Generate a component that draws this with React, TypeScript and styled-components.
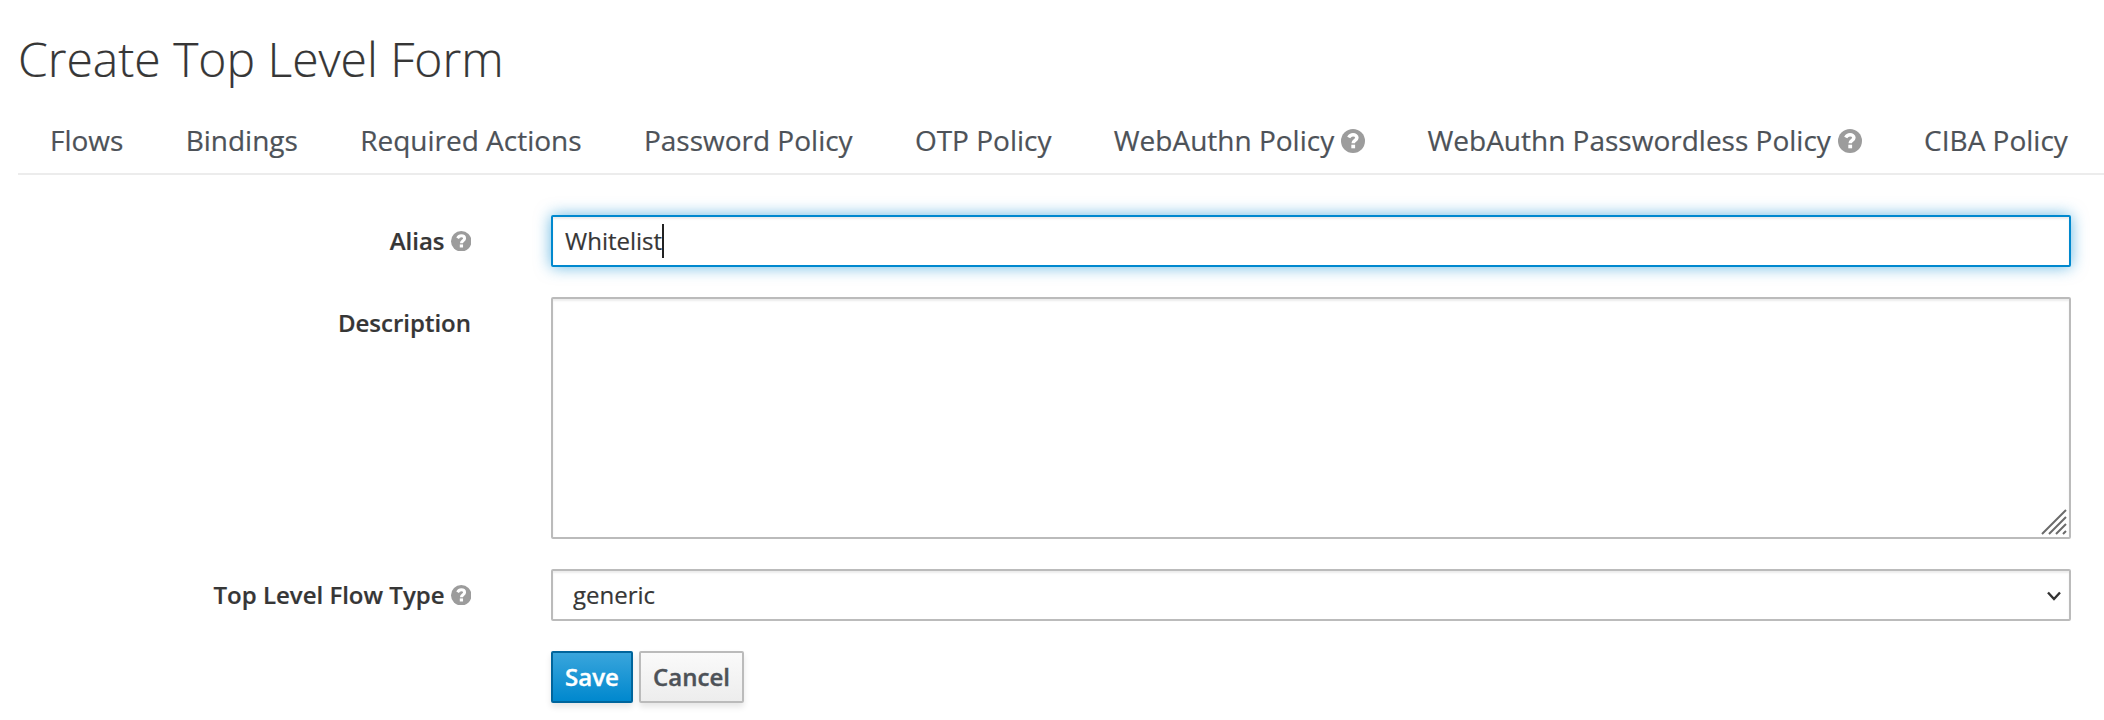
import React from "react";
import styled, { createGlobalStyle, css } from "styled-components";

const Global = createGlobalStyle`
  * { box-sizing: border-box; }
  html, body { margin: 0; background: #fff; overflow: hidden; }
  body, textarea, select, button { font-family: "Open Sans", "Noto Sans", sans-serif; }
`;

const Page = styled.main`
  height: 720px;
  padding: 26px 0 0 18px;
  color: #363636;
  font-size: 24px;
  line-height: 40px;
  -webkit-text-stroke: 0.2px;
`;

const Title = styled.h1`
  margin: 0;
  font-size: 48px;
  font-weight: 300;
  line-height: 66px;
`;

const Tabs = styled.nav`
  display: flex;
  gap: 62.25px;
  height: 83px;
  padding: 25px 0 0 32px;
  border-bottom: 2px solid #ececec;
`;

const Tab = styled.a`
  display: flex;
  align-items: center;
  gap: 7px;
  height: 46px;
  color: #4d5258;
  font-size: 28px;
  white-space: nowrap;

  svg {
    margin-top: 2px;
  }
`;

const Form = styled.form`
  display: flex;
  flex-direction: column;
  gap: 30px;
  padding: 40px 33px 0 0;
`;

const Row = styled.div`
  display: grid;
  grid-template-columns: 453px 1520px;
  column-gap: 80px;
  align-items: start;
`;

const Label = styled.label`
  display: flex;
  justify-content: flex-end;
  align-items: center;
  gap: 6px;
  height: 52px;
  font-weight: 600;
  white-space: nowrap;
`;

const field = css`
  display: block;
  width: 100%;
  border: 2px solid #bbb;
  border-radius: 2px;
  background: #fff;
  color: #363636;
  box-shadow: inset 0 2px 2px rgba(3, 3, 3, 0.075);
`;

const FocusedInput = styled.div`
  ${field}
  display: flex;
  align-items: center;
  height: 52px;
  padding: 0 12px;
  border-color: #0088ce;
  box-shadow: inset 0 2px 2px rgba(3, 3, 3, 0.075), 0 0 16px rgba(0, 136, 206, 0.6);
`;

const Caret = styled.span`
  width: 2px;
  height: 34px;
  background: #222;
`;

const Overlay = styled.div`
  position: relative;
`;

const TextArea = styled.textarea`
  ${field}
  height: 242px;
  resize: none;
  outline: none;
`;

const Grip = styled.svg`
  position: absolute;
  right: 4px;
  bottom: 4px;
`;

const Select = styled.select`
  ${field}
  appearance: none;
  height: 52px;
  padding: 0 20px 2px;
  font-size: 24px;
`;

const Chevron = styled.svg`
  position: absolute;
  right: 10px;
  top: 22px;
`;

const Actions = styled.div`
  grid-column: 2;
  display: flex;
  gap: 6px;
`;

const Button = styled.button<{ $primary?: boolean }>`
  width: ${(p) => (p.$primary ? 82 : 105)}px;
  height: 52px;
  padding: 0;
  border: 2px solid ${(p) => (p.$primary ? "#00659c" : "#bbb")};
  border-radius: 2px;
  background: ${(p) =>
    p.$primary
      ? "linear-gradient(#39a5dc, #0088ce)"
      : "linear-gradient(#fafafa, #ededed)"};
  box-shadow: 0 4px 6px rgba(3, 3, 3, 0.1);
  color: ${(p) => (p.$primary ? "#fff" : "#4d5258")};
  font-size: 24px;
  font-weight: 600;
  -webkit-text-stroke: 0.4px;
  line-height: 40px;
`;

const Help = ({ size }: { size: number }) => (
  <svg width={size} height={size} viewBox="0 0 24 24" aria-hidden="true">
    <circle cx="12" cy="12" r="12" fill="#9c9c9c" />
    <path
      d="M7.7 8.5C8.7 6.7 10 5.7 12 5.7c2.1 0 3.9 1.2 3.9 3.1 0 2.6-3.7 2.7-3.7 5.4"
      fill="none"
      stroke="#fff"
      strokeWidth="3.5"
    />
    <rect x="10.3" y="15.7" width="3.8" height="3.6" fill="#fff" />
  </svg>
);

const tabs = [
  { name: "Flows" },
  { name: "Bindings" },
  { name: "Required Actions" },
  { name: "Password Policy" },
  { name: "OTP Policy" },
  { name: "WebAuthn Policy", help: true },
  { name: "WebAuthn Passwordless Policy", help: true },
  { name: "CIBA Policy" },
];

export default function App() {
  return (
    <Page>
      <Global />
      <Title>Create Top Level Form</Title>
      <Tabs>
        {tabs.map((t) => (
          <Tab key={t.name}>
            {t.name}
            {t.help && <Help size={24} />}
          </Tab>
        ))}
      </Tabs>
      <Form>
        <Row>
          <Label>
            Alias
            <Help size={20.5} />
          </Label>
          <FocusedInput>
            Whitelist
            <Caret />
          </FocusedInput>
        </Row>
        <Row>
          <Label>Description</Label>
          <Overlay>
            <TextArea />
            <Grip width="26" height="26" viewBox="0 0 26 26" stroke="#6b6b6b" strokeWidth="2">
              <path d="M1 25 25 1M8 25 25 8M15 25 25 15M22 25 25 22" />
            </Grip>
          </Overlay>
        </Row>
        <Row>
          <Label>
            Top Level Flow Type
            <Help size={20.5} />
          </Label>
          <Overlay>
            <Select defaultValue="generic">
              <option>generic</option>
            </Select>
            <Chevron width="14" height="10" viewBox="0 0 14 10" fill="none" stroke="#333" strokeWidth="2.4">
              <path d="M1 1.5 7 8l6-6.5" />
            </Chevron>
          </Overlay>
        </Row>
        <Row>
          <Actions>
            <Button type="button" $primary>
              Save
            </Button>
            <Button type="button">Cancel</Button>
          </Actions>
        </Row>
      </Form>
    </Page>
  );
}
